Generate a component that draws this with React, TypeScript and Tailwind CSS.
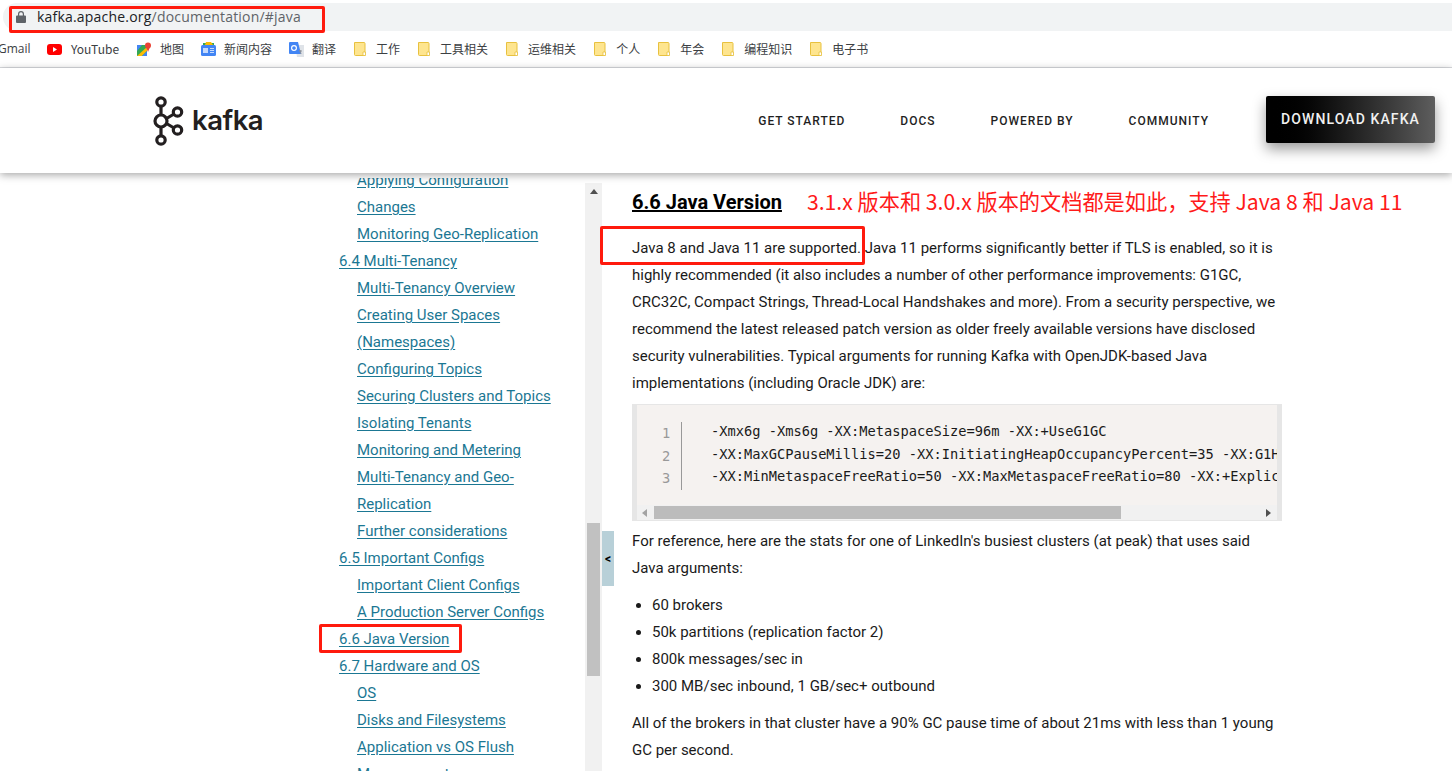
import React from "react";

const CJK = "font-['Noto_Sans_CJK_SC','Liberation_Sans',sans-serif]";

/** --- Bookmark icons --- **/
const YouTubeIcon = () => (
  <svg width="15" height="11" viewBox="0 0 15 11">
    <rect width="15" height="11" rx="3" fill="#f00" />
    <path d="M6 3l4 2.5L6 8z" fill="#fff" />
  </svg>
);

const MapsIcon = () => (
  <svg width="15" height="15" viewBox="0 0 15 15">
    <path d="M0 3h10v11H0z" fill="#34a853" />
    <path d="M0 3h5L0 9z" fill="#4285f4" />
    <path d="M0 14l10-9v4l-5 5z" fill="#fbbc04" />
    <path d="M5 14l5-5v5z" fill="#4285f4" />
    <circle cx="11" cy="3.5" r="3" fill="#ea4335" />
    <path d="M9 5l2 5 2-5z" fill="#ea4335" />
  </svg>
);

const NewsIcon = () => (
  <svg width="15" height="14" viewBox="0 0 15 14">
    <path d="M2 1h11v3H2z" fill="#34a853" />
    <path d="M5 0h5l2 3H4z" fill="#fbbc04" />
    <rect y="3" width="15" height="11" rx="1.5" fill="#4285f4" />
    <rect x="2" y="6" width="5" height="5" fill="#c6dafc" />
    <path d="M9 6h4v1H9zM9 8h4v1H9zM9 10h4v1H9z" fill="#c6dafc" />
  </svg>
);

const TranslateIcon = () => (
  <svg width="15" height="15" viewBox="0 0 15 15">
    <path d="M6 3h9v12H8z" fill="#dfe3e8" />
    <path d="M1 0h8l3 12H1a1 1 0 0 1-1-1V1a1 1 0 0 1 1-1z" fill="#4285f4" />
    <circle cx="5" cy="6" r="2.4" fill="none" stroke="#fff" strokeWidth="1.2" />
    <path d="M10 9h3M11 8l1 4" stroke="#8a9099" strokeWidth="1" fill="none" />
  </svg>
);

const FolderIcon = () => (
  <svg width="12" height="14" viewBox="0 0 12 14">
    <path d="M.5.5h9.5a1 1 0 0 1 1 1v12H1.500a1 1 0 0 1-1-1z" fill="#fee58f" stroke="#e8c13f" />
    <path d="M9 10h2.500v3.500H9z" fill="#fff" stroke="#e8c13f" strokeWidth=".8" />
  </svg>
);

const KafkaMark = () => (
  <svg width="32" height="52" viewBox="0 0 32 52" fill="none" stroke="#231f20" strokeWidth="3.2">
    <circle cx="8" cy="7" r="4.200" />
    <circle cx="8" cy="26" r="6" />
    <circle cx="8" cy="45" r="4.200" />
    <circle cx="24.500" cy="17" r="4.200" />
    <circle cx="24.500" cy="35" r="4.200" />
    <path d="M8 11v9M8 32v9M13.500 23.500l7.500-4.500M13.500 28.500l7.500 4.500" />
  </svg>
);

/** --- Data --- **/
const bookmarks: { icon: React.ReactNode; label: string; box: string; after: string }[] = [
  { icon: <YouTubeIcon />, label: "YouTube", box: "w-[16px]", after: "mr-[18px]" },
  { icon: <MapsIcon />, label: "地图", box: "w-[15px]", after: "mr-[17px]" },
  { icon: <NewsIcon />, label: "新闻内容", box: "w-[15px]", after: "mr-[17px]" },
  { icon: <TranslateIcon />, label: "翻译", box: "w-[15px]", after: "mr-[18px]" },
  ...["工作", "工具相关", "运维相关", "个人", "年会", "编程知识", "电子书"].map(label => ({
    icon: <FolderIcon />,
    label,
    box: "w-[14px]",
    after: "mr-[18px]",
  })),
];

const navItems = ["GET STARTED", "DOCS", "POWERED BY", "COMMUNITY"];

const tocItems: { label: string; sub?: boolean }[] = [
  { label: "Applying Configuration", sub: true },
  { label: "Changes", sub: true },
  { label: "Monitoring Geo-Replication", sub: true },
  { label: "6.4 Multi-Tenancy" },
  { label: "Multi-Tenancy Overview", sub: true },
  { label: "Creating User Spaces", sub: true },
  { label: "(Namespaces)", sub: true },
  { label: "Configuring Topics", sub: true },
  { label: "Securing Clusters and Topics", sub: true },
  { label: "Isolating Tenants", sub: true },
  { label: "Monitoring and Metering", sub: true },
  { label: "Multi-Tenancy and Geo-", sub: true },
  { label: "Replication", sub: true },
  { label: "Further considerations", sub: true },
  { label: "6.5 Important Configs" },
  { label: "Important Client Configs", sub: true },
  { label: "A Production Server Configs", sub: true },
  { label: "6.6 Java Version" },
  { label: "6.7 Hardware and OS" },
  { label: "OS", sub: true },
  { label: "Disks and Filesystems", sub: true },
  { label: "Application vs OS Flush", sub: true },
  { label: "Measurement", sub: true },
];

const codeLines = [
  "-Xmx6g -Xms6g -XX:MetaspaceSize=96m -XX:+UseG1GC",
  "-XX:MaxGCPauseMillis=20 -XX:InitiatingHeapOccupancyPercent=35 -XX:G1HeapRegionSize=16M",
  "-XX:MinMetaspaceFreeRatio=50 -XX:MaxMetaspaceFreeRatio=80 -XX:+ExplicitGCInvokesConcurrent",
];

const stats = [
  "60 brokers",
  "50k partitions (replication factor 2)",
  "800k messages/sec in",
  "300 MB/sec inbound, 1 GB/sec+ outbound",
];

const paraLines = [
  "Java 8 and Java 11 are supported. Java 11 performs significantly better if TLS is enabled, so it is",
  "highly recommended (it also includes a number of other performance improvements: G1GC,",
  "CRC32C, Compact Strings, Thread-Local Handshakes and more). From a security perspective, we",
  "recommend the latest released patch version as older freely available versions have disclosed",
  "security vulnerabilities. Typical arguments for running Kafka with OpenJDK-based Java",
  "implementations (including Oracle JDK) are:",
];

/** --- Main Component --- **/
export default function App() {
  return (
    <div className="relative h-[771px] w-[1452px] overflow-hidden bg-white font-['Roboto',sans-serif] text-[#1a1a1a]">
      {/* browser chrome */}
      <div className="pt-[3px]">
        <div className="ml-[3px] flex h-[28px] items-center rounded-l-[14px] bg-[#f1f3f4] pl-[13px]">
          <svg width="10" height="12" viewBox="0 0 10 12" fill="#5f6368">
            <path d="M5 0a3 3 0 0 1 3 3v1.500h1a1 1 0 0 1 1 1V11a1 1 0 0 1-1 1H1a1 1 0 0 1-1-1V5.500a1 1 0 0 1 1-1h1V3a3 3 0 0 1 3-3zm0 1.200A1.800 1.800 0 0 0 3.200 3v1.500h3.600V3A1.800 1.800 0 0 0 5 1.200z" />
          </svg>
          <div className="ml-[11px] text-[14px] leading-[28px] tracking-[0.2px] font-['Open_Sans',sans-serif] whitespace-nowrap">
            <span className="text-[#202124]">kafka.apache.org</span>
            <span className="text-[#5f6368]">/documentation/#java</span>
          </div>
        </div>
        <div className={`flex h-[37px] items-center border-b border-[#dadce0] text-[12px] text-[#3c4043] whitespace-nowrap ${CJK}`}>
          <span className="-ml-[2px] mr-[16px] w-[33px] overflow-hidden font-['Open_Sans',sans-serif]">Gmail</span>
          {bookmarks.map(b => (
            <div key={b.label} className={`${b.after} flex items-center gap-[8px]`}>
              <span className={`${b.box} flex justify-start`}>{b.icon}</span>
              <span>{b.label}</span>
            </div>
          ))}
        </div>
      </div>

      {/* site header */}
      <header className="relative z-10 flex h-[105px] items-center justify-between bg-white pl-[153px] pr-[17px] shadow-[0_2px_8px_rgba(0,0,0,0.35)]">
        <div className="flex items-center gap-[7px]">
          <KafkaMark />
          <span className="font-['Inter',sans-serif] text-[27.5px] font-semibold leading-none tracking-[-0.5px] text-[#231f20]">kafka</span>
        </div>
        <nav className="flex items-center">
          {navItems.map(item => (
            <a key={item} className="mr-[55px] text-[12px] font-medium tracking-[1px] text-[#1f1f1f]">{item}</a>
          ))}
          <a className="mb-[2px] ml-[2px] flex h-[47px] w-[169px] items-center justify-center rounded-[2px] bg-gradient-to-r from-[#000000] to-[#5e5e5e] text-[14px] font-medium tracking-[1.1px] text-[#f0f0f0] shadow-[0_6px_14px_rgba(0,0,0,0.4)]">
            DOWNLOAD KAFKA
          </a>
        </nav>
      </header>

      <div className="flex h-[598px]">
        {/* toc */}
        <aside className="mt-[5px] h-[593px] w-[585px] overflow-hidden pl-[339px]">
          <ul className="-mt-[11px] text-[15px] leading-[27px] text-[#1b7793]">
            {tocItems.map(t => (
              <li key={t.label} className={t.sub ? "pl-[18px]" : ""}>
                <a className="underline underline-offset-[2px] whitespace-nowrap">{t.label}</a>
              </li>
            ))}
          </ul>
        </aside>

        {/* toc scrollbar */}
        <div className="mt-[10px] flex h-[588px] w-[17px] flex-col bg-[#f1f1f1]">
          <div className="flex h-[340px] justify-center pt-[6px]">
            <span className="h-0 w-0 border-x-[4px] border-b-[5px] border-x-transparent border-b-[#505050]" />
          </div>
          <div className="ml-[2px] h-[153px] w-[13px] bg-[#c1c1c1]" />
        </div>

        {/* collapse toggle */}
        <div className="mt-[358px] flex h-[55px] w-[12px] items-center justify-center bg-[#b8d0d8] text-[12px] font-bold text-black">
          &lt;
        </div>

        {/* main */}
        <main className="ml-[18px] w-[650px] text-[15px] leading-[27px] text-[#1a1a1a]">
          <div className="flex h-[57px] items-center whitespace-nowrap pt-[1px]">
            <h3 className="text-[20px] font-bold text-black underline">6.6 Java Version</h3>
            <span className={`mb-[4px] ml-[25px] text-[21.2px] leading-[27px] text-[#ff1a1a] ${CJK}`}>3.1.x 版本和 3.0.x 版本的文档都是如此，支持 Java 8 和 Java 11</span>
          </div>
          <div className="mt-[5px] whitespace-nowrap">
            {paraLines.map(l => <p key={l}>{l}</p>)}
          </div>

          {/* code block */}
          <div className="mt-[7px] h-[117px] w-[650px] border-x-[5px] border-y border-[#e6e6e6] bg-[#f5f2f0]">
            <div className="flex h-[100px] overflow-hidden pt-[15px] font-['DejaVu_Sans_Mono',monospace] text-[13.7px] leading-[22.500px]">
              <div className="ml-[25px] mt-[2px] h-[68px] w-[20px] shrink-0 border-r border-[#999] text-[#999]">
                <div>1</div>
                <div>2</div>
                <div>3</div>
              </div>
              <div className="ml-[29px] whitespace-pre text-[#1a1a1a]">
                {codeLines.map(c => <div key={c}>{c}</div>)}
              </div>
            </div>
            <div className="flex h-[15px] items-center bg-[#f1f1f1]">
              <span className="ml-[5px] h-0 w-0 border-y-[4px] border-r-[5px] border-y-transparent border-r-[#a3a3a3]" />
              <div className="ml-[7px] h-[13px] w-[467px] bg-[#bcbcbc]" />
              <span className="ml-[145px] h-0 w-0 border-y-[4px] border-l-[5px] border-y-transparent border-l-[#505050]" />
            </div>
          </div>

          <p className="mt-[7px]">For reference, here are the stats for one of LinkedIn's busiest clusters (at peak) that uses said<br />Java arguments:</p>
          <ul className="mt-[10px] list-disc pl-[20px]">
            {stats.map(s => <li key={s}>{s}</li>)}
          </ul>
          <p className="mt-[10px]">All of the brokers in that cluster have a 90% GC pause time of about 21ms with less than 1 young<br />GC per second.</p>
        </main>
      </div>

      {/* red annotation boxes */}
      <div className="absolute left-[9px] top-[6px] z-20 h-[27px] w-[316px] rounded-[2px] border-[3px] border-[#ff1a0d]" />
      <div className="absolute left-[600px] top-[226px] z-20 h-[39px] w-[265px] rounded-[2px] border-[3px] border-[#ff1a0d]" />
      <div className="absolute left-[319px] top-[624px] z-20 h-[29px] w-[143px] rounded-[2px] border-[3px] border-[#ff1a0d]" />
    </div>
  );
}
